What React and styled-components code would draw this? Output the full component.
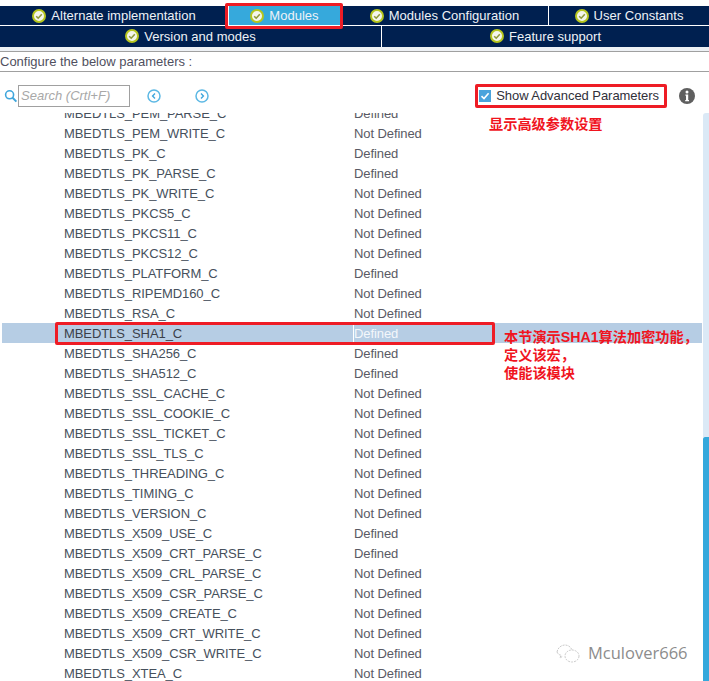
import React from 'react';
import styled, { createGlobalStyle } from 'styled-components';

const Global = createGlobalStyle`
  html, body { margin: 0; padding: 0; background: #fff; }
  body { font-family: "Liberation Sans", Arial, sans-serif; }
`;

const Page = styled.div`
  position: relative;
  width: 709px;
  height: 681px;
  overflow: hidden;
  background: #fff;
  padding-top: 6px;
  box-sizing: border-box;
  display: flex;
  flex-direction: column;
`;

const TabRow = styled.div`
  display: grid;
  grid-template-columns: ${p => p.$cols};
  height: ${p => p.$h}px;
  background: #002050;
  margin-bottom: ${p => p.$mb || 0}px;
`;

const Tab = styled.div`
  display: flex;
  align-items: center;
  justify-content: center;
  gap: 5px;
  color: #eef2f7;
  font-size: 13px;
  letter-spacing: 0.02px;
  padding-bottom: ${p => p.$pb || 0}px;
  background: ${p => (p.$active ? '#36a9dc' : '#002050')};
  border-left: ${p => (p.$divider ? '1px solid #fff' : 'none')};
  border-right: ${p => (p.$active ? '1px solid #fff' : 'none')};
  box-sizing: border-box;
`;

const TabSpacer = styled.div`
  height: 4px;
  background: #eef1f5;
`;

const ConfigureBar = styled.div`
  height: 19px;
  line-height: 19px;
  border-top: 1px solid #a0a0a0;
  border-bottom: 1px solid #a0a0a0;
  font-size: 13px;
  color: #505060;
`;

const Toolbar = styled.div`
  height: 41px;
  display: flex;
  align-items: center;
  padding: 6px 0 0 4px;
  box-sizing: border-box;
`;

const SearchBox = styled.div`
  width: 108px;
  height: 20px;
  border: 1px solid #a0a0a0;
  color: #a8a8a8;
  font-style: italic;
  font-size: 13px;
  line-height: 20px;
  padding-left: 2px;
  white-space: nowrap;
  overflow: hidden;
`;

const NavGroup = styled.div`
  display: flex;
  gap: 34px;
  margin-left: 17px;
`;

const Advanced = styled.div`
  margin-left: auto;
  display: flex;
  align-items: center;
  gap: 5px;
  font-size: 13px;
  letter-spacing: -0.05px;
  color: #30303a;
  margin-right: 50px;
`;

const CheckBox = styled.div`
  width: 12px;
  height: 12px;
  background: #4aa3dc;
  display: flex;
  align-items: center;
  justify-content: center;
`;

const Info = styled.div`
  position: absolute;
  left: 679px;
  top: 88px;
  width: 16px;
  height: 16px;
`;

const ListArea = styled.div`
  flex: 1;
  min-height: 0;
  display: flex;
  overflow: hidden;
`;

const List = styled.div`
  flex: 1;
  min-width: 0;
  margin: -10px 1px 0 0;
  padding-left: 2px;
`;

const Row = styled.div`
  display: grid;
  grid-template-columns: 290px 1fr;
  height: 20px;
  line-height: 22px;
  font-size: 13px;
  letter-spacing: -0.08px;
  padding-left: 62px;
  color: ${p => (p.$selected ? '#3a3f4a' : '#46505c')};
  background: ${p => (p.$selected ? '#b6cde4' : 'transparent')};
`;

const Value = styled.span`
  color: ${p => (p.$selected ? '#f4f7fb' : '#5a5a64')};
  border-left: ${p => (p.$selected ? '1px solid #fff' : 'none')};
  margin-left: ${p => (p.$selected ? '-1px' : '0')};
`;

const Scrollbar = styled.div`
  width: 6px;
  display: flex;
  flex-direction: column;
`;

const Track = styled.div`
  height: 324px;
  background: #dbe9f6;
  border-radius: 3px 0 0 0;
`;

const Thumb = styled.div`
  flex: 1;
  background: #34a8dc;
  border-radius: 2px 0 0 0;
`;

const RedBox = styled.div`
  position: absolute;
  left: ${p => p.$x}px;
  top: ${p => p.$y}px;
  width: ${p => p.$w}px;
  height: ${p => p.$h}px;
  border: 3px solid #ee1c25;
  border-radius: 2px;
  box-sizing: border-box;
`;

const Callout = styled.div`
  position: absolute;
  left: ${p => p.$x}px;
  top: ${p => p.$y}px;
  color: #f0141e;
  font-weight: 700;
  font-size: 14.2px;
  line-height: 18px;
  font-family: "Liberation Sans", "Noto Sans CJK SC", sans-serif;
  white-space: nowrap;
`;

const Watermark = styled.div`
  position: absolute;
  left: 556px;
  top: 641px;
  display: flex;
  align-items: center;
  gap: 8px;
  color: #8c8c8c;
  font-family: "Open Sans", sans-serif;
  font-size: 16.5px;
`;

const Tick = ({ size = 14 }) => (
  <svg width={size} height={size} viewBox="0 0 14 14">
    <circle cx="7" cy="7" r="6" fill="#f4f6ec" stroke="#b6c61e" strokeWidth="2" />
    <path d="M4.2 7.2 6.2 9.2 9.8 5.2" fill="none" stroke="#8f9a3a" strokeWidth="1.6" />
  </svg>
);

const SearchIcon = () => (
  <svg width="14" height="14" viewBox="0 0 14 14" style={{ flex: 'none' }}>
    <circle cx="5.6" cy="5.8" r="4" fill="none" stroke="#3fa6dc" strokeWidth="1.6" />
    <path d="M8.6 8.8 12.4 12.6" stroke="#3fa6dc" strokeWidth="2" />
  </svg>
);

const NavIcon = ({ dir }) => (
  <svg width="14" height="14" viewBox="0 0 14 14">
    <circle cx="7" cy="7" r="6" fill="none" stroke="#5cb8e4" strokeWidth="1.5" />
    <path d={dir === 'l' ? 'M8 4.6 5.6 7 8 9.4' : 'M6 4.6 8.4 7 6 9.4'} fill="none" stroke="#3fa6dc" strokeWidth="1.4" />
  </svg>
);

const rows = [
  ['MBEDTLS_PEM_PARSE_C', 'Defined'],
  ['MBEDTLS_PEM_WRITE_C', 'Not Defined'],
  ['MBEDTLS_PK_C', 'Defined'],
  ['MBEDTLS_PK_PARSE_C', 'Defined'],
  ['MBEDTLS_PK_WRITE_C', 'Not Defined'],
  ['MBEDTLS_PKCS5_C', 'Not Defined'],
  ['MBEDTLS_PKCS11_C', 'Not Defined'],
  ['MBEDTLS_PKCS12_C', 'Not Defined'],
  ['MBEDTLS_PLATFORM_C', 'Defined'],
  ['MBEDTLS_RIPEMD160_C', 'Not Defined'],
  ['MBEDTLS_RSA_C', 'Not Defined'],
  ['MBEDTLS_SHA1_C', 'Defined', true],
  ['MBEDTLS_SHA256_C', 'Defined'],
  ['MBEDTLS_SHA512_C', 'Defined'],
  ['MBEDTLS_SSL_CACHE_C', 'Not Defined'],
  ['MBEDTLS_SSL_COOKIE_C', 'Not Defined'],
  ['MBEDTLS_SSL_TICKET_C', 'Not Defined'],
  ['MBEDTLS_SSL_TLS_C', 'Not Defined'],
  ['MBEDTLS_THREADING_C', 'Not Defined'],
  ['MBEDTLS_TIMING_C', 'Not Defined'],
  ['MBEDTLS_VERSION_C', 'Not Defined'],
  ['MBEDTLS_X509_USE_C', 'Defined'],
  ['MBEDTLS_X509_CRT_PARSE_C', 'Defined'],
  ['MBEDTLS_X509_CRL_PARSE_C', 'Not Defined'],
  ['MBEDTLS_X509_CSR_PARSE_C', 'Not Defined'],
  ['MBEDTLS_X509_CREATE_C', 'Not Defined'],
  ['MBEDTLS_X509_CRT_WRITE_C', 'Not Defined'],
  ['MBEDTLS_X509_CSR_WRITE_C', 'Not Defined'],
  ['MBEDTLS_XTEA_C', 'Not Defined'],
];

export default function App() {
  return (
    <Page>
      <Global />
      <TabRow $cols="228px 113px 207px 161px" $h={19} $mb={1}>
        <Tab><Tick />Alternate implementation</Tab>
        <Tab $active $divider><Tick />Modules</Tab>
        <Tab><Tick />Modules Configuration</Tab>
        <Tab $divider><Tick />User Constants</Tab>
      </TabRow>
      <TabRow $cols="381px 328px" $h={21}>
        <Tab $pb={1}><Tick />Version and modes</Tab>
        <Tab $divider $pb={1}><Tick />Feature support</Tab>
      </TabRow>
      <TabSpacer />
      <ConfigureBar>Configure the below parameters :</ConfigureBar>
      <Toolbar>
        <SearchIcon />
        <SearchBox>Search (Crtl+F)</SearchBox>
        <NavGroup>
          <NavIcon dir="l" />
          <NavIcon dir="r" />
        </NavGroup>
        <Advanced>
          <CheckBox>
            <svg width="10" height="10" viewBox="0 0 10 10">
              <path d="M1.5 5.2 4 7.6 8.6 2.2" fill="none" stroke="#fff" strokeWidth="1.6" />
            </svg>
          </CheckBox>
          Show Advanced Parameters
        </Advanced>
      </Toolbar>
      <Info>
        <svg width="16" height="16" viewBox="0 0 16 16">
          <circle cx="8" cy="8" r="8" fill="#5f5f5f" />
          <circle cx="8" cy="4" r="1.5" fill="#fff" />
          <path d="M6.4 6.6H9.2V12H10V13.2H6.2V12H7V7.8H6.4Z" fill="#fff" />
        </svg>
      </Info>
      <ListArea>
        <List>
          {rows.map(([name, value, selected]) => (
            <Row key={name} $selected={selected}>
              <span>{name}</span>
              <Value $selected={selected}>{value}</Value>
            </Row>
          ))}
        </List>
        <Scrollbar>
          <Track />
          <Thumb />
        </Scrollbar>
      </ListArea>

      <RedBox $x={225} $y={3} $w={118} $h={26} />
      <RedBox $x={475} $y={84} $w={192} $h={24} />
      <RedBox $x={55} $y={322} $w={440} $h={23} />
      <Callout $x={489} $y={115}>显示高级参数设置</Callout>
      <Callout $x={504} $y={328}>
        本节演示SHA1算法加密功能，<br />定义该宏，<br />使能该模块
      </Callout>
      <Watermark>
        <svg width="24" height="20" viewBox="0 0 24 20" fill="none" stroke="#c4c4c4" strokeWidth="0.9" strokeDasharray="2 1">
          <path d="M1 9C2 4 6 2 9 2s6 2 7 5" />
          <ellipse cx="16" cy="13" rx="7" ry="6" />
          <path d="M1 9c1 2 2 3 4 3l-1 3 3-2" />
        </svg>
        Mculover666
      </Watermark>
    </Page>
  );
}
